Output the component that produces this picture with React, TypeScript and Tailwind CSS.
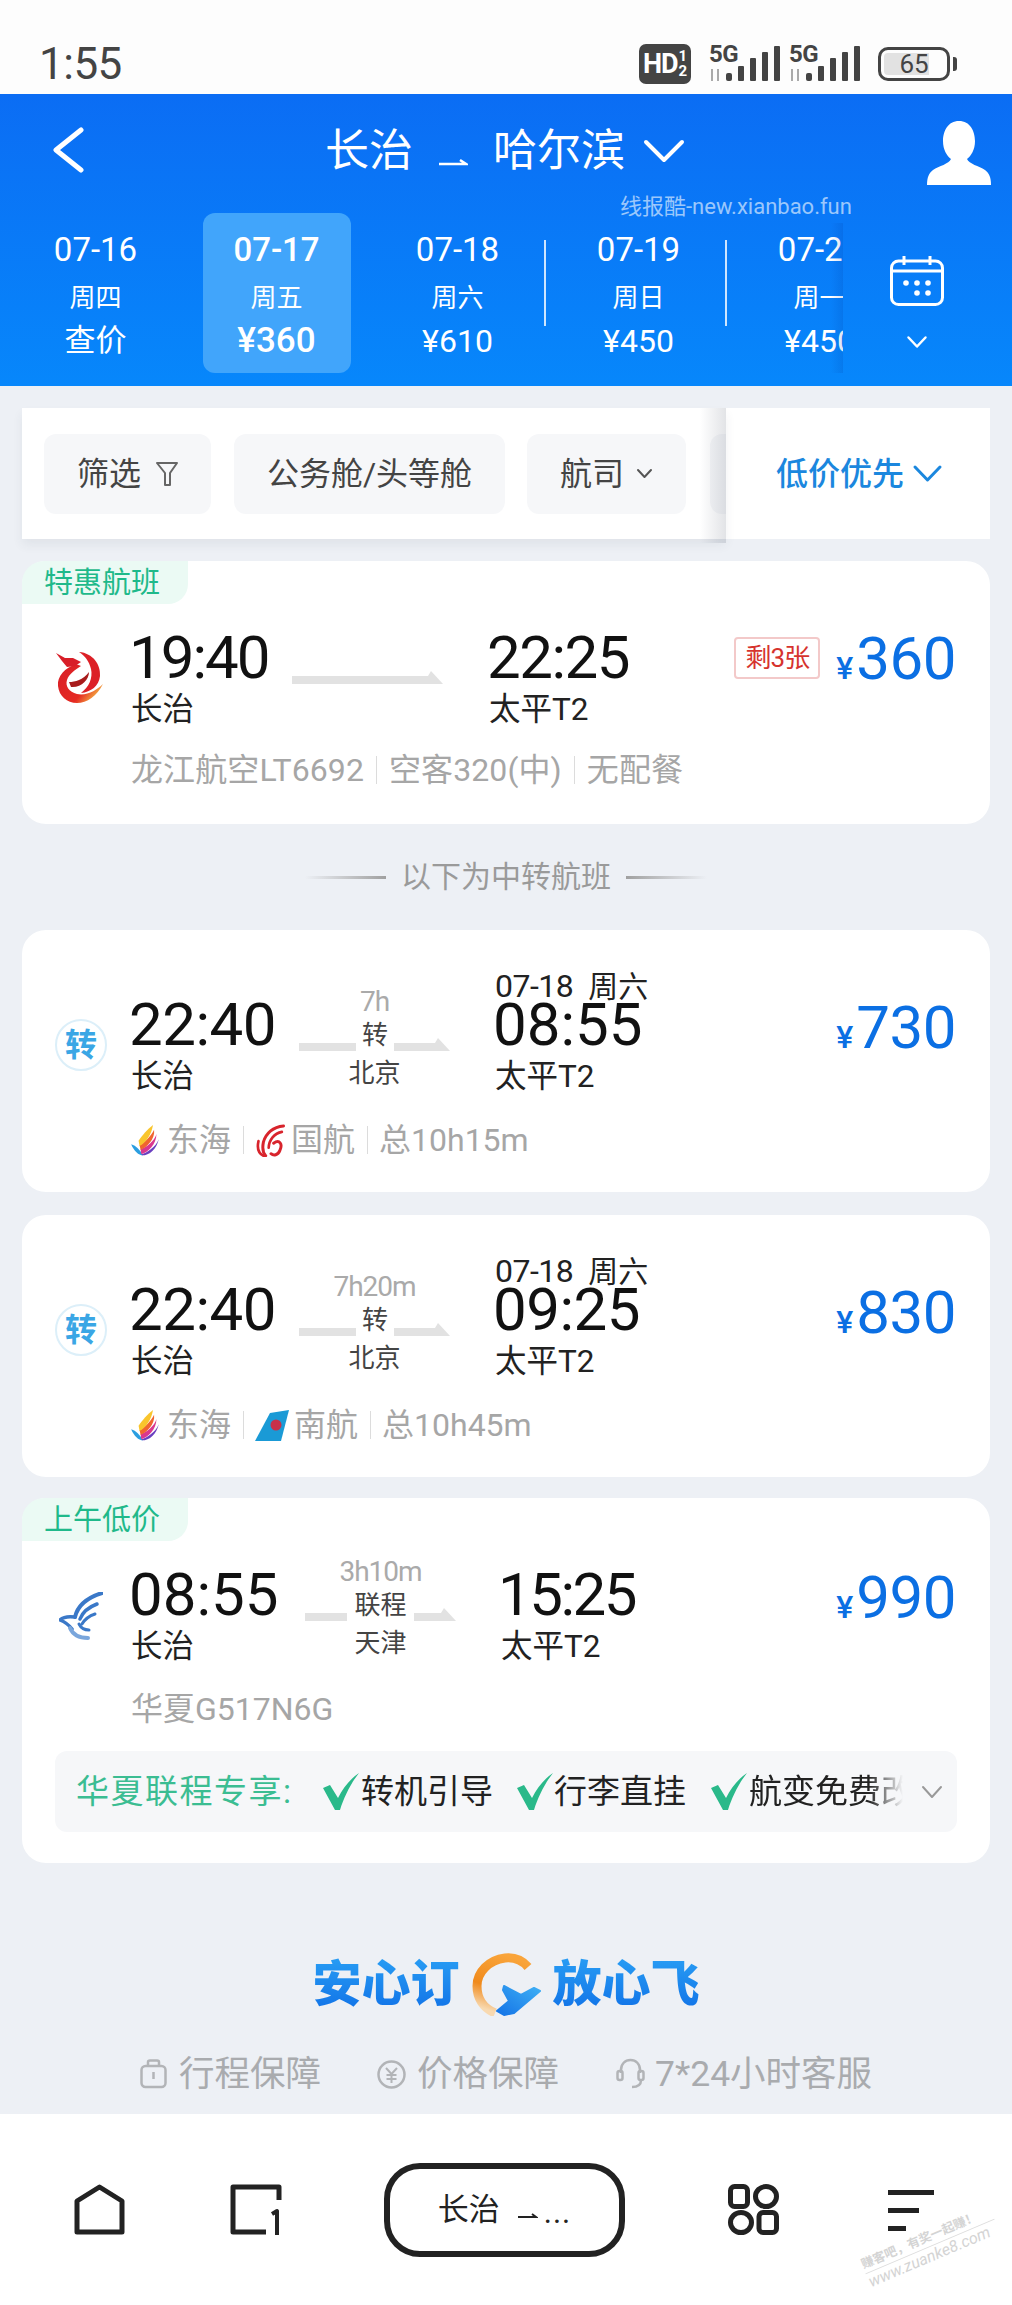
import React from "react";

const Chevron = ({ w, h, color, sw }: { w: number; h: number; color: string; sw: number }) => (
  <svg width={w} height={h} viewBox={`0 0 ${w} ${h}`} fill="none" className="shrink-0">
    <polyline points={`${sw},${sw} ${w / 2},${h - sw} ${w - sw},${sw}`} stroke={color} strokeWidth={sw} strokeLinecap="round" strokeLinejoin="round" />
  </svg>
);

const Signal = () => (
  <div className="relative w-[71px] h-[38px]">
    <span className="absolute left-0 -top-[1px] text-[24px] leading-[20px] font-bold text-[#444] tracking-[-0.5px]">5G</span>
    <svg width="71" height="38" viewBox="0 0 71 38" className="absolute left-0 top-0">
      <g fill="#444">
        <rect x="17" y="28" width="6" height="8" rx="2" />
        <rect x="29" y="21" width="6" height="15" rx="1" />
        <rect x="41" y="13" width="6" height="23" rx="1" />
        <rect x="53" y="7" width="6" height="29" rx="1" />
        <rect x="65" y="1" width="6" height="35" rx="1" />
      </g>
      <g stroke="#aaa" strokeWidth="2">
        <line x1="3" y1="24" x2="3" y2="36" />
        <line x1="9" y1="24" x2="9" y2="36" />
      </g>
    </svg>
  </div>
);

const Bar = ({ w }: { w: number }) => (
  <svg width={w} height="13" viewBox={`0 0 ${w} 13`} className="shrink-0">
    <polygon points={`0,5 ${w - 15},5 ${w - 12},0 ${w},13 0,13`} fill="#e2e2e2" />
  </svg>
);

const Longjiang = () => (
  <svg width="52" height="55" viewBox="25 30 52 55">
    <defs>
      <linearGradient id="lj" x1="0" y1="0" x2="1" y2="0.7">
        <stop offset="0" stopColor="#d81e28" />
        <stop offset="0.7" stopColor="#e52a22" />
        <stop offset="1" stopColor="#f5bb45" />
      </linearGradient>
    </defs>
    <path d="M50 32C64 33 72 45 71 56C70 66 62 72 52 73C60 67 64 58 62 49C60 41 56 36 50 32Z" fill="#dc2026" />
    <path d="M47 44C36 48 28 56 29 66C30 76 38 83 48 83C58 83 68 76 74 64C68 70 58 76 48 74C40 72 36 66 38 60C40 54 46 50 52 46Z" fill="url(#lj)" />
    <path d="M40 62C46 62 54 60 60 52C60 60 52 68 42 67Z" fill="#a81c1c" />
    <path d="M27 33L36 38L44 38L52 42L46 46L38 47L33 41Z" fill="#d81e28" />
  </svg>
);

const ZhuanBadge = () => (
  <div className="w-[52px] h-[52px] rounded-full border-2 border-[#dceff9] flex items-center justify-center text-[32px] leading-[32px] font-bold text-[#3aa6e5]">转</div>
);

const Huaxia = () => (
  <svg width="44" height="48" viewBox="0 0 44 48" fill="none" strokeLinecap="round">
    <g stroke="#3a78c8">
      <path d="M43 1C30 5 19 12 16 25" strokeWidth="4" />
      <path d="M38 12C30 15 24 19 21 27" strokeWidth="3.5" />
      <path d="M36 22C30 24 26 27 23 32" strokeWidth="3" />
      <path d="M16 25C8 24 3 26 1 28C6 30 10 33 13 37" strokeWidth="3.5" />
      <path d="M11 36C14 43 21 46 29 46" strokeWidth="4" stroke="#7aa6dc" />
      <path d="M20 32C22 36 25 38 30 38" strokeWidth="3" />
    </g>
  </svg>
);

const Donghai = () => (
  <svg width="29" height="32" viewBox="40 55 85 95">
    <path d="M40 115C55 120 65 130 75 148C62 148 48 135 40 115Z" fill="#2a9ee0" />
    <path d="M72 145C85 140 112 125 122 100C115 130 95 148 72 148Z" fill="#6a3fc0" />
    <path d="M68 130C85 125 110 105 115 85C115 115 90 140 70 145Z" fill="#d9388f" />
    <path d="M65 118C80 110 100 90 108 72C112 100 85 125 68 132Z" fill="#f0652f" />
    <path d="M62 105C72 90 88 70 105 58C100 85 85 110 65 120Z" fill="#f9c52c" />
  </svg>
);

const Guohang = () => (
  <svg width="31" height="33" viewBox="420 50 85 100" fill="none" stroke="#d8242c" strokeLinecap="round">
    <path d="M502 56C470 58 448 80 441 105C437 125 440 138 448 146" strokeWidth="9" />
    <path d="M497 74C474 78 458 98 457 122" strokeWidth="8" />
    <path d="M426 102C421 125 428 142 445 148" strokeWidth="8" />
    <path d="M472 108C490 96 500 110 491 130C485 145 472 147 464 140" strokeWidth="9" />
  </svg>
);

const Nanhang = () => (
  <svg width="34" height="33" viewBox="0 0 34 33">
    <polygon points="0,32 15,4 34,1 26,32" fill="#1a9ad6" />
    <circle cx="21" cy="16" r="5.5" fill="#c8304a" />
  </svg>
);

const Check = () => (
  <svg width="36" height="37" viewBox="0 0 36 37" className="shrink-0">
    <path d="M0 15L7 12L15 25C20 15 27 6 36 0C28 10 21 24 17 37H12Z" fill="#2ab98a" />
  </svg>
);

const Sep = () => <span className="w-px h-[28px] bg-[#dcdcdc] mx-[12px] shrink-0" />;

const Time = ({ children, track }: { children: React.ReactNode; track: string }) => (
  <div className={`h-[60px] text-[60px] leading-[60px] text-[#111] whitespace-nowrap ${track}`}>{children}</div>
);

const City = ({ children }: { children: React.ReactNode }) => (
  <div className="mt-[2px] h-[40px] text-[31.5px] leading-[40px] text-[#222] whitespace-nowrap">{children}</div>
);

const Price = ({ v }: { v: string }) => (
  <div className="flex items-baseline mt-[4px] -mr-[2px] text-[#0b6fe3] h-[58px] leading-[58px]">
    <span className="text-[32px] mr-[3px] font-medium">¥</span>
    <span className="text-[60px] tracking-[-0.5px]">{v}</span>
  </div>
);

const Connector = ({ dur, mid, city, barCls, right }: { dur: string; mid: string; city: string; barCls: string; right: number }) => (
  <div className="w-[151px] shrink-0 -mt-[3px] flex flex-col items-center">
    <div className="h-[20px] leading-[20px] text-[28px] text-[#aaa] tracking-[-1px]">{dur}</div>
    <div className="mt-[7px] h-[34px] w-full flex items-end justify-between pb-[2px]">
      <div className={`h-[8px] bg-[#e2e2e2] ${barCls}`} />
      <span className="self-center text-[26px] leading-[34px] text-[#444]">{mid}</span>
      <Bar w={right} />
    </div>
    <div className="mt-[2px] h-[36px] leading-[36px] text-[26px] text-[#444]">{city}</div>
  </div>
);

const Tag = ({ children }: { children: React.ReactNode }) => (
  <div className="absolute left-0 top-0 w-[166px] h-[43px] pl-[22px] bg-[#ebfaf4] rounded-br-[20px] rounded-tl-[22px] text-[29px] leading-[45px] text-[#1fb98a]">{children}</div>
);

const Meta = ({ children, cls }: { children: React.ReactNode; cls?: string }) => (
  <div className={`mt-[23px] h-[40px] flex items-center text-[32px] leading-[40px] text-[#a6a6a6] whitespace-nowrap ${cls ?? ""}`}>{children}</div>
);

const Transfer = ({ cls, dur, arr, total, price, second, secondName, arrTrack }: any) => (
  <section className={`mx-[22px] h-[262px] bg-white rounded-[24px] pt-[65px] flex ${cls}`}>
    <div className="w-[109px] shrink-0 pl-[33px] pt-[24px]"><ZhuanBadge /></div>
    <div className="flex-1 pr-[36px]">
      <div className="flex">
        <div className="w-[168px] shrink-0">
          <div className="-ml-[2px]"><Time track="tracking-[-0.5px]">22:40</Time></div>
          <City>长治</City>
        </div>
        <Connector dur={dur} mid="转" city="北京" barCls="w-[57px]" right={56} />
        <div className="ml-[45px]">
          <div className="-mt-[18px] h-[18px] leading-[18px] text-[#222] whitespace-nowrap flex items-baseline">
            <span className="text-[32px] tracking-[-0.5px]">07-18</span>
            <span className="ml-[15px] text-[30px]">周六</span>
          </div>
          <div className="-ml-[2px]"><Time track={arrTrack}>{arr}</Time></div>
          <City>太平T2</City>
        </div>
        <div className="ml-auto"><Price v={price} /></div>
      </div>
      <Meta>
        <Donghai />
        <span className="ml-[7px]">东海</span>
        <Sep />
        <span className="-ml-[1px]">{second}</span>
        <span className="ml-[5px]">{secondName}</span>
        <Sep />
        <span className="-ml-[1px]">{total}</span>
      </Meta>
    </div>
  </section>
);

export default function App() {
  const days = [
    { d: "07-16", w: "周四", p: "查价", big: true },
    { d: "07-17", w: "周五", p: "¥360", on: true },
    { d: "07-18", w: "周六", p: "¥610", div: true },
    { d: "07-19", w: "周日", p: "¥450", div: true },
    { d: "07-20", w: "周一", p: "¥450" },
  ];
  return (
    <div className="relative w-[1012px] h-[2305px] overflow-hidden flex flex-col bg-[#edf0f5] [font-family:Roboto,'Noto_Sans_CJK_SC',sans-serif]">
      {/* status bar */}
      <div className="h-[94px] shrink-0 bg-[#fdfdfd] pt-[34px] pl-[39px] pr-[55px] flex items-center">
        <span className="text-[44px] leading-[50px] text-[#444] tracking-[-0.5px]">1:55</span>
        <div className="ml-auto flex items-center">
          <div className="w-[52px] h-[40px] rounded-[7px] bg-[#444] text-white flex items-center justify-center">
            <span className="text-[27px] leading-[30px] font-bold tracking-[-1px]">HD</span>
            <span className="flex flex-col items-center text-[15px] leading-[15px] font-bold ml-[1px]"><span>1</span><span>2</span></span>
          </div>
          <div className="ml-[18px]"><Signal /></div>
          <div className="ml-[9px]"><Signal /></div>
          <div className="ml-[18px] w-[72px] h-[34px] rounded-[10px] border-[3px] border-[#444] bg-[linear-gradient(90deg,#e2e2e2_72%,transparent_72%)] bg-clip-content p-[3px] flex items-center justify-center text-[26px] leading-[26px] text-[#444]">65</div>
          <div className="ml-[3px] w-[4px] h-[14px] rounded-r-[3px] bg-[#444]" />
        </div>
      </div>

      {/* blue header */}
      <header className="relative h-[292px] shrink-0 bg-[linear-gradient(180deg,#0b6df4,#0787fb)] text-white">
        <div className="pt-[27px] pl-[52px] pr-[21px] flex items-start justify-between h-[91px]">
          <svg width="32" height="46" viewBox="0 0 32 46" fill="none" className="mt-[6px]">
            <polyline points="29,3 4,23 29,43" stroke="#fff" strokeWidth="5" strokeLinecap="round" strokeLinejoin="round" />
          </svg>
          <div className="flex items-center h-[60px] text-[44px] leading-[60px] whitespace-nowrap">
            <span>长治</span>
            <svg width="30" height="14" viewBox="0 0 30 14" className="ml-[25px] mr-[25px] mt-[18px]" fill="none">
              <path d="M1 11H28L22 7" stroke="#fff" strokeWidth="2.5" />
            </svg>
            <span>哈尔滨</span>
            <div className="ml-[17px]"><Chevron w={44} h={26} color="#fff" sw={4} /></div>
          </div>
          <svg width="64" height="64" viewBox="0 0 64 64">
            <path d="M32 0C43 0 48 10 48 20C48 29 44 35 40 38C42 43 52 45 58 49C62 52 64 56 64 64H0C0 56 2 52 6 49C12 45 22 43 24 38C20 35 16 29 16 20C16 10 21 0 32 0Z" fill="#fff" />
          </svg>
        </div>
        <span className="absolute left-[620px] top-[102px] text-[22px] leading-[22px] text-white/60 whitespace-nowrap">线报酷-new.xianbao.fun</span>
        <div className="mt-[28px] h-[160px] flex">
          <div className="relative w-[843px] shrink-0 overflow-hidden flex pl-[5px]">
            {days.map((x) => (
              <div key={x.d} className="relative w-[181px] shrink-0">
                <div className={`mx-auto w-[148px] h-[160px] rounded-[12px] pt-[17px] flex flex-col items-center ${x.on ? "bg-[#41a5fb]" : ""}`}>
                  <div className={`h-[40px] text-[33px] leading-[40px] ${x.on ? "font-medium" : ""}`}>{x.d}</div>
                  <div className="mt-[10px] h-[36px] text-[26px] leading-[36px]">{x.w}</div>
                  <div className={`mt-[7px] h-[36px] leading-[36px] whitespace-nowrap ${x.big ? "text-[31px]" : x.on ? "text-[35px] font-medium" : "text-[32px]"}`}>{x.p}</div>
                </div>
                {x.div && <span className="absolute right-[2px] top-[27px] w-[2px] h-[86px] bg-white/80" />}
              </div>
            ))}
            <span className="absolute right-0 top-[10px] bottom-0 w-[12px] bg-[linear-gradient(90deg,transparent,rgba(0,50,150,0.14))]" />
          </div>
          <div className="flex-1 pl-[47px] pt-[43px] flex flex-col">
            <svg width="54" height="50" viewBox="0 0 54 50" fill="none" stroke="#fff" strokeWidth="3">
              <rect x="1.5" y="5" width="51" height="43.5" rx="7" />
              <line x1="2" y1="15" x2="52" y2="15" />
              <line x1="14" y1="0" x2="14" y2="9" />
              <line x1="40" y1="0" x2="40" y2="9" />
              <g fill="#fff" stroke="none">
                <circle cx="16" cy="27" r="2.8" /><circle cx="27" cy="27" r="2.8" /><circle cx="38" cy="27" r="2.8" />
                <circle cx="27" cy="37" r="2.8" /><circle cx="38" cy="37" r="2.8" />
              </g>
            </svg>
            <div className="mt-[29px] ml-[16px]"><Chevron w={22} h={14} color="#fff" sw={2.5} /></div>
          </div>
        </div>
      </header>

      {/* filter bar */}
      <div className="mt-[22px] mx-[22px] h-[131px] shrink-0 flex">
        <div className="relative w-[704px] shrink-0 bg-white shadow-[0_6px_10px_rgba(60,70,90,0.07)]">
          <div className="h-full overflow-hidden flex items-center pl-[22px] text-[32px] leading-[40px] text-[#444] whitespace-nowrap">
            <div className="w-[167px] h-[80px] shrink-0 rounded-[12px] bg-[#f6f7f9] flex items-center justify-center gap-[15px]">
              <span>筛选</span>
              <svg width="22" height="26" viewBox="0 0 22 26" fill="none" stroke="#666" strokeWidth="2" strokeLinejoin="round">
                <path d="M1 2H21L14 12V24H9V12Z" />
              </svg>
            </div>
            <div className="ml-[23px] w-[271px] h-[80px] shrink-0 rounded-[12px] bg-[#f6f7f9] flex items-center justify-center">公务舱/头等舱</div>
            <div className="ml-[22px] w-[159px] h-[80px] shrink-0 rounded-[12px] bg-[#f6f7f9] flex items-center justify-center gap-[12px]">
              <span>航司</span>
              <Chevron w={17} h={11} color="#555" sw={2} />
            </div>
            <div className="ml-[24px] w-[120px] h-[80px] shrink-0 rounded-[12px] bg-[#f6f7f9]" />
          </div>
          <span className="absolute right-0 top-0 h-[135px] w-[26px] bg-[linear-gradient(90deg,transparent,rgba(60,70,90,0.15))]" />
        </div>
        <div className="flex-1 bg-white flex items-center pl-[50px] gap-[8px] text-[32px] leading-[40px] text-[#1b87de] font-medium whitespace-nowrap">
          <span>低价优先</span>
          <Chevron w={31} h={19} color="#1b87de" sw={3} />
        </div>
      </div>

      {/* direct flight */}
      <section className="relative mt-[22px] mx-[22px] h-[263px] shrink-0 bg-white rounded-[24px] pt-[67px] flex">
        <Tag>特惠航班</Tag>
        <div className="w-[109px] shrink-0 pl-[32px] pt-[22px]"><Longjiang /></div>
        <div className="flex-1 pr-[36px]">
          <div className="flex">
            <div className="w-[161px] shrink-0">
              <div className="-ml-[2px]"><Time track="tracking-[-2px]">19:40</Time></div>
              <City>长治</City>
            </div>
            <div className="mt-[43px]"><Bar w={151} /></div>
            <div className="ml-[46px]">
              <div className="-ml-[2px]"><Time track="tracking-[-1.5px]">22:25</Time></div>
              <City>太平T2</City>
            </div>
            <div className="ml-auto flex items-start gap-[16px]">
              <div className="mt-[9px] w-[86px] h-[42px] rounded-[4px] border-2 border-[#f3c9c9] flex items-center justify-center text-[26px] leading-[30px] text-[#d6332e] whitespace-nowrap tracking-[-1px]">剩3张</div>
              <div className="-mt-[2px]"><Price v="360" /></div>
            </div>
          </div>
          <div className="-mt-[3px]">
            <Meta cls="tracking-[0.1px]">
              <span>龙江航空LT6692</span>
              <Sep />
              <span>空客320(中)</span>
              <Sep />
              <span>无配餐</span>
            </Meta>
          </div>
        </div>
      </section>

      {/* divider */}
      <div className="h-[106px] shrink-0 flex items-center justify-center gap-[15px] text-[30px] leading-[40px] text-[#9a9a9a]">
        <span className="w-[81px] h-[3px] bg-[linear-gradient(90deg,transparent,#a0a0a0)]" />
        <span>以下为中转航班</span>
        <span className="w-[81px] h-[3px] bg-[linear-gradient(270deg,transparent,#a0a0a0)]" />
      </div>

      <Transfer dur="7h" arr="08:55" total="总10h15m" price="730" second={<Guohang />} secondName="国航" cls="shrink-0" arrTrack="tracking-[0px]" />
      <Transfer dur="7h20m" arr="09:25" total="总10h45m" price="830" second={<Nanhang />} secondName="南航" cls="mt-[23px] shrink-0" arrTrack="tracking-[-0.5px]" />

      {/* connecting flight */}
      <section className="relative mt-[21px] mx-[22px] h-[365px] shrink-0 bg-white rounded-[24px] pt-[67px] flex flex-col">
        <Tag>上午低价</Tag>
        <div className="flex">
          <div className="w-[109px] shrink-0 pl-[37px] pt-[27px]"><Huaxia /></div>
          <div className="flex-1 pr-[36px]">
            <div className="flex">
              <div className="w-[174px] shrink-0">
                <div className="-ml-[2px]"><Time track="tracking-[0px]">08:55</Time></div>
                <City>长治</City>
              </div>
              <Connector dur="3h10m" mid="联程" city="天津" barCls="w-[42px]" right={42} />
              <div className="ml-[45px]">
                <div className="-ml-[3px]"><Time track="tracking-[-2.5px]">15:25</Time></div>
                <City>太平T2</City>
              </div>
              <div className="ml-auto"><Price v="990" /></div>
            </div>
            <div className="mt-[22px] h-[40px] text-[32px] leading-[40px] text-[#a6a6a6]">华夏G517N6G</div>
          </div>
        </div>
        <div className="mt-[22px] mx-[33px] h-[81px] rounded-[12px] bg-[#f6f7f9] flex items-center pl-[21px] text-[33px] leading-[40px] text-[#222] whitespace-nowrap">
          <span className="w-[247px] shrink-0 text-[#3bbd92] tracking-[1.5px]">华夏联程专享:</span>
          <Check />
          <span className="ml-[2px]">转机引导</span>
          <span className="ml-[24px]"><Check /></span>
          <span className="ml-[1px]">行李直挂</span>
          <span className="ml-[25px]"><Check /></span>
          <span className="ml-[2px] w-[154px] overflow-hidden [mask-image:linear-gradient(90deg,#000_78%,transparent)]">航变免费改</span>
          <span className="ml-[18px]"><Chevron w={22} h={14} color="#999" sw={2} /></span>
        </div>
      </section>

      {/* brand */}
      <div className="mt-[90px] h-[63px] shrink-0 flex items-center justify-center text-[49px] leading-[63px] font-black">
        <span className="bg-[linear-gradient(180deg,#2aa0f5,#0f6fe6)] bg-clip-text text-transparent">安心订</span>
        <svg width="69" height="63" viewBox="0 0 69 63" className="mx-[12px]" fill="none">
          <defs>
            <linearGradient id="ring" x1="0.7" y1="0" x2="0.4" y2="1">
              <stop offset="0" stopColor="#f9a43a" />
              <stop offset="0.6" stopColor="#f08a1c" />
              <stop offset="1" stopColor="#f8d9b0" />
            </linearGradient>
            <linearGradient id="plane" x1="0" y1="1" x2="1" y2="0">
              <stop offset="0" stopColor="#1473e6" />
              <stop offset="1" stopColor="#3fb0f5" />
            </linearGradient>
          </defs>
          <path d="M56 14C50 7 42 4 33 5C17 7 5 19 5 33C5 45 11 55 23 60" stroke="url(#ring)" strokeWidth="9" />
          <path d="M32 33L49 42L62 35L68 38L42 60L32 62L25 58L37 48L31 37Z" fill="url(#plane)" stroke="url(#plane)" strokeWidth="2" strokeLinejoin="round" />
        </svg>
        <span className="bg-[linear-gradient(180deg,#2aa0f5,#0f6fe6)] bg-clip-text text-transparent">放心飞</span>
      </div>

      {/* guarantees */}
      <div className="mt-[38px] h-[40px] shrink-0 flex items-center justify-center text-[35.5px] leading-[40px] text-[#a9abae] whitespace-nowrap">
        <svg width="27" height="30" viewBox="0 0 27 30" fill="none" stroke="#b2b4b7" strokeWidth="2.5">
          <rect x="1.5" y="7" width="24" height="21" rx="4" />
          <path d="M8 7V3C8 2 9 1.5 10 1.5H17C18 1.5 19 2 19 3V7" />
          <line x1="13.5" y1="13" x2="13.5" y2="20" />
        </svg>
        <span className="ml-[12px]">行程保障</span>
        <svg width="29" height="29" viewBox="0 0 29 29" fill="none" stroke="#b2b4b7" strokeWidth="2.5" className="ml-[56px]">
          <circle cx="14.5" cy="14.5" r="13" />
          <path d="M9 8L14.5 14L20 8M14.5 14V23M9.5 15H19.5M9.5 19H19.5" strokeWidth="2" />
        </svg>
        <span className="ml-[11px]">价格保障</span>
        <svg width="29" height="32" viewBox="0 0 29 32" fill="none" stroke="#b2b4b7" strokeWidth="2.5" className="ml-[57px]">
          <path d="M5 15V12C5 6 9 2 14.5 2C20 2 24 6 24 12V15" />
          <rect x="1.5" y="13" width="5" height="9" rx="2" />
          <rect x="22.5" y="13" width="5" height="9" rx="2" />
          <path d="M25 22C25 27 21 29 16 29" />
        </svg>
        <span className="ml-[10px]">7*24小时客服</span>
      </div>

      {/* bottom nav */}
      <nav className="mt-auto h-[191px] shrink-0 bg-white flex items-center pl-[74px]">
        <svg width="51" height="51" viewBox="0 0 51 51" fill="none" stroke="#222" strokeWidth="5" strokeLinejoin="round">
          <path d="M3 48V17L25.5 3L48 17V48Z" />
        </svg>
        <svg width="52" height="51" viewBox="0 0 52 51" fill="none" stroke="#222" strokeWidth="5" strokeLinejoin="round" className="ml-[105px]">
          <path d="M49 16V3H3V48H36" />
          <path d="M42 30L47 27V51" strokeWidth="4" />
        </svg>
        <div className="ml-[102px] w-[241px] h-[94px] rounded-[36px] border-[6px] border-[#222] flex items-center justify-center text-[31px] leading-[40px] text-[#222] whitespace-nowrap">
          <span>长治</span>
          <svg width="20" height="10" viewBox="0 0 20 10" className="ml-[18px] mr-[6px] mt-[8px]" fill="none">
            <path d="M0 8H18L14 5" stroke="#222" strokeWidth="2" />
          </svg>
          <span className="mt-[6px] tracking-[1px]">...</span>
        </div>
        <svg width="51" height="51" viewBox="0 0 51 51" fill="none" stroke="#222" strokeWidth="5" className="ml-[103px]">
          <rect x="2.5" y="2.5" width="17" height="20" rx="4" />
          <ellipse cx="38" cy="12.5" rx="10.5" ry="10" />
          <ellipse cx="13" cy="38.5" rx="10.5" ry="10" />
          <rect x="31" y="28.5" width="17.5" height="20" rx="4" />
        </svg>
        <svg width="46" height="46" viewBox="0 0 46 46" fill="#222" className="ml-[109px]">
          <rect x="0" y="3" width="46" height="5" />
          <rect x="0" y="21" width="31" height="5" />
          <rect x="0" y="39" width="18" height="5" />
        </svg>
      </nav>

      {/* forum watermark */}
      <div className="absolute left-[860px] top-[2228px] w-[140px] -rotate-[23deg] text-[#d4d4d4] leading-[18px] whitespace-nowrap">
        <div className="text-[12.5px] font-bold">赚客吧，有奖一起赚！</div>
        <div className="text-[16px] italic border-t border-[#dddddd]">www.zuanke8.com</div>
      </div>
    </div>
  );
}
